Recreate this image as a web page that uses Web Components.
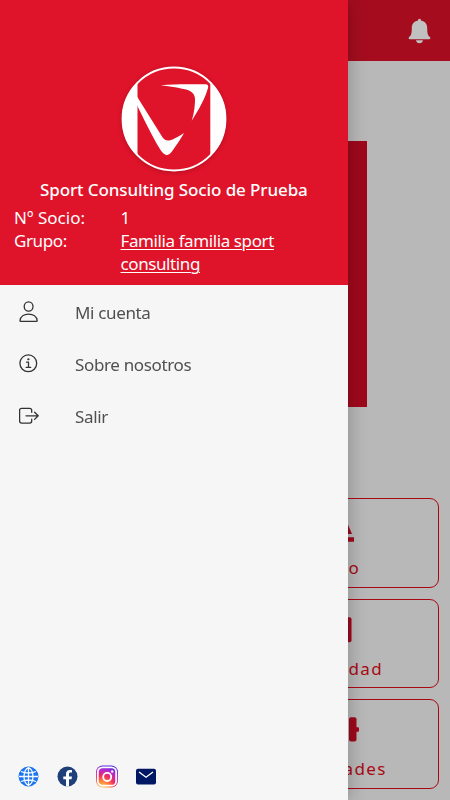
<!DOCTYPE html>
<html lang="es"><head><meta charset="utf-8"><title>Sport Consulting</title>
<style>html,body{margin:0;height:100%;overflow:hidden}body{font-family:"Noto Sans","Open Sans",sans-serif}</style></head>
<body>
<club-app></club-app>
<script>
const define=(name,html)=>customElements.define(name,class extends HTMLElement{
  constructor(){super();const t=document.createElement('template');t.innerHTML=html;this.attachShadow({mode:'open'}).append(t.content.cloneNode(true));}
});
define('top-bar',`<style>:host{display:flex;height:60.500px;box-sizing:border-box;background:#a50d1e;justify-content:flex-end;align-items:center;padding:1px 19px 0 0}svg{display:block}</style>
<svg width="23" height="26" viewBox="0 0 23 26" fill="#c1c1c1"><path d="M11.500 0.800c1 0 1.500.7 1.500 1.800 4.300.9 6.200 3.700 6.200 7.800 0 5.600 1 7.200 2.700 8.700.9.900.5 2.100-.8 2.100H1.900c-1.300 0-1.700-1.200-.8-2.100 1.700-1.500 2.700-3.100 2.700-8.700 0-4.100 1.900-6.900 6.200-7.800 0-1.100.5-1.800 1.500-1.800zM8 22.300h7c-.3 1.800-1.600 3-3.500 3s-3.200-1.200-3.500-3z"/></svg>`);
define('option-card',`<style>:host{display:flex;flex-direction:column;box-sizing:border-box;height:89.500px;border:1px solid #a80914;border-radius:9px;padding:18px 0 0 117px;color:#a80914;font-size:17px;letter-spacing:1.400px;line-height:24px}
.icon{height:39px}.label{white-space:nowrap;margin-left:var(--label-shift,-.5px)}::slotted(svg){display:block;overflow:visible}</style>
<div class="icon"><slot name="icon"></slot></div><div class="label"><slot></slot></div>`);
define('home-page',`<style>:host{display:flex;flex-direction:column;height:800px;background:#b8b8b8}
.banner{width:283px;height:266px;margin:80.500px auto 91px;background:#9f081b}
.grid{display:grid;grid-template-columns:208px 208px;gap:11px 12px;margin:0 11px}
option-card{grid-column:2}</style>
<top-bar></top-bar><div class="banner"></div>
<div class="grid">
<option-card><svg slot="icon" width="30" height="38" fill="#9f081b"><path d="M-3 3l6 14h-9zM-8 20.300H5V24.800H-8z"/></svg>o</option-card>
<option-card><svg slot="icon" width="30" height="38" fill="#9f081b"><rect x="-18" y="-.7" width="20.500" height="25" rx="2"/></svg>dad</option-card>
<option-card style="--label-shift:-5.500px"><svg slot="icon" width="30" height="38" fill="#9f081b"><rect x="0" y="-.7" width="7.500" height="24.200" rx="2"/><rect x="5" y="9.300" width="5" height="4.500" rx="1"/></svg>ades</option-card>
</div>`);
define('club-logo',`<style>:host{display:block;width:106px;height:106px}svg{display:block;overflow:visible;filter:drop-shadow(0 1px 2px #0003)}</style>
<svg width="106" height="106" viewBox="0 0 106 106"><defs><clipPath id="c"><circle cx="53" cy="53" r="52"/></clipPath></defs>
<circle cx="53" cy="53" r="51.500" fill="#df132a"/><g clip-path="url(#c)" fill="#fff"><path d="M0 0H16.500V106H0zM89.300 0H106V106H89.300z"/></g><circle cx="53" cy="53" r="51.400" fill="none" stroke="#fff" stroke-width="2"/>
<path fill="#fff" d="M39.700 19.200C55 17.800 71 18.300 84.500 18.300Q88 18.500 87 22C84 33 78 43 70.700 54.800C72.800 48 73.600 43 74 35C74.400 29 72 25.500 65 23.500C59 21.800 50 20.800 39.700 19.200zM16 30.500L41 70.500C45 77 50 75.500 63 67C59 74 54 81.500 50.500 86Q46 92.300 41 86C36 79 26 60 16 39z"/></svg>`);
define('member-header',`<style>:host{display:flex;flex-direction:column;box-sizing:border-box;height:285px;background:#df132a;color:#fff;padding-top:66px}
club-logo{margin-left:121px}
.name{margin:6px 0 5px 40px;font-weight:500;font-size:17px;line-height:23px;white-space:nowrap;letter-spacing:-.1px}
dl{display:grid;grid-template-columns:106.500px 190px;margin:0 0 0 14px;font-size:17px;line-height:23px;letter-spacing:-.4px}
dt,dd{margin:0}dt:first-child{letter-spacing:.05px}a{color:inherit;text-decoration:underline;text-underline-offset:2px;text-decoration-thickness:1px}</style>
<club-logo></club-logo><div class="name"><slot></slot></div>
<dl><dt>Nº Socio:</dt><dd>1</dd><dt>Grupo:</dt><dd><a>Familia familia sport<br>consulting</a></dd></dl>`);
define('menu-item',`<style>:host{display:grid;grid-template-columns:20px 1fr;column-gap:36px;height:52px;padding-left:19px;align-items:center;font-size:17px;color:#505050;letter-spacing:-.35px}span{margin-top:-1px}::slotted(svg){display:block;margin-top:-3px}</style>
<slot name="icon"></slot><span><slot></slot></span>`);
define('social-links',`<style>:host{display:flex;align-items:center;gap:18px;padding:0 0 0 18px;height:24px;margin-bottom:12px}svg{display:block}</style>
<svg width="21" height="21" viewBox="0 0 21 21"><circle cx="10.500" cy="10.500" r="10" fill="#1b76ee"/><g fill="none" stroke="#f5f8ff" stroke-width="1.300"><ellipse cx="10.500" cy="10.500" rx="4.500" ry="8.500"/><path d="M10.500 1v19M1 10.500h19M3 5.500q7.500 3 15 0M3 15.500q7.500-3 15 0"/></g></svg>
<svg width="21" height="21" viewBox="0 0 21 21"><circle cx="10.500" cy="10.500" r="10" fill="#1f3f78"/><path fill="#fff" d="M9 20.500v-7.200H6.300v-2.900H9V8c0-2.700 1.500-4.100 3.900-4.100.9 0 1.800.1 2.100.2v2.400h-1.400c-1.200 0-1.600.7-1.600 1.600v2.300h3l-.5 2.900H12v7.200z"/></svg>
<svg width="22" height="23" viewBox="0 0 23 23"><defs><radialGradient id="g" cx=".28" cy="1.050" r="1.100"><stop offset="0" stop-color="#ffd35d"/><stop offset=".3" stop-color="#ff853b"/><stop offset=".55" stop-color="#f02a65"/><stop offset=".78" stop-color="#b02ad0"/><stop offset="1" stop-color="#4b22e8"/></radialGradient></defs><rect x="0" y="0" width="23" height="23" rx="7" fill="url(#g)"/><rect x="1.900" y="1.900" width="19.200" height="19.200" rx="5" fill="none" stroke="#fff" stroke-width="1.900"/><circle cx="11.700" cy="12" r="4.200" fill="none" stroke="#fff" stroke-width="1.900"/><circle cx="17" cy="6.200" r="1.300" fill="#fff"/></svg>
<svg width="20" height="17" viewBox="0 0 20 17"><rect y=".8" width="20" height="15.700" rx="2" fill="#001764"/><path d="M3 4l7 5.300L17 4" fill="none" stroke="#fff" stroke-width="1.300"/></svg>`);
define('side-drawer',`<style>:host{position:fixed;inset:0 auto 0 0;width:348px;background:#f6f6f6;display:flex;flex-direction:column;box-shadow:0 0 18px #00000042}
nav{flex:1;padding-top:2px}svg{stroke:#333;fill:none;stroke-width:1.300;stroke-linecap:round;stroke-linejoin:round}</style>
<member-header>Sport Consulting Socio de Prueba</member-header>
<nav>
<menu-item><svg slot="icon" width="20" height="22" viewBox="0 0 20 22"><ellipse cx="9.600" cy="5.500" rx="4.400" ry="4.600"/><path d="M1 19.700c.4-4.300 4.100-6.600 8.600-6.600s8.200 2.300 8.600 6.600q0 .6-.8.6H1.800q-.8 0-.8-.6z"/></svg>Mi cuenta</menu-item>
<menu-item><svg slot="icon" width="20" height="20" viewBox="0 0 20 20"><circle cx="9.300" cy="9.300" r="8.400"/><path d="M7.500 8.200h2v5M7.200 13.400h4.500"/><circle cx="9.300" cy="5.300" r=".7" fill="#333" stroke-width=".7"/></svg>Sobre nosotros</menu-item>
<menu-item><svg slot="icon" width="20" height="18" viewBox="0 0 20 18"><path d="M12.700 5.300V3.400q0-2-2-2H2.600q-2 0-2 2v10.700q0 2 2 2h8.100q2 0 2-2v-1.900M7 8.800h12M15.600 5.200l3.600 3.600-3.600 3.600"/></svg>Salir</menu-item>
</nav><social-links></social-links>`);
define('club-app',`<style>:host{display:block;width:450px;height:800px;overflow:hidden}</style><home-page></home-page><side-drawer></side-drawer>`);
</script></body></html>
